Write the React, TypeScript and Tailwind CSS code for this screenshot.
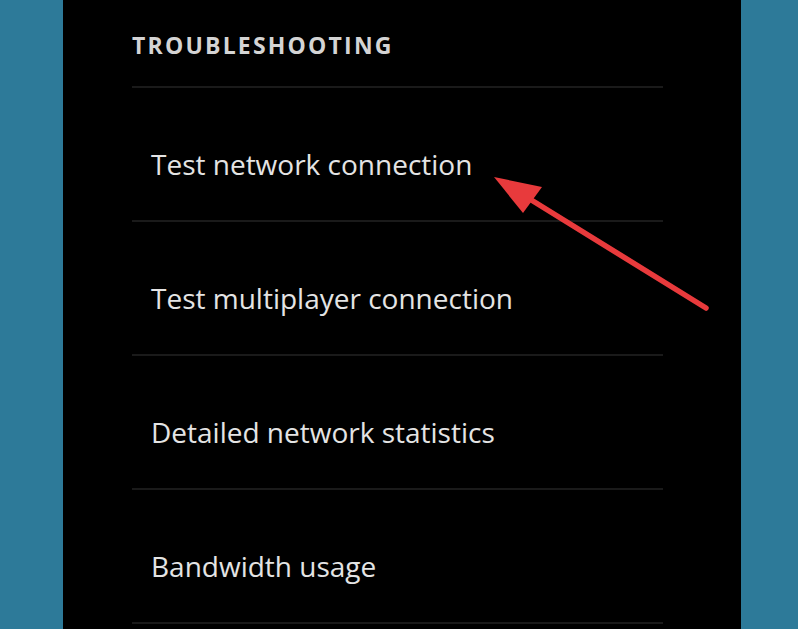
import React from 'react';

const items = [
  'Test network connection',
  'Test multiplayer connection',
  'Detailed network statistics',
  'Bandwidth usage',
];

// red annotation arrow drawn over the first row
const Arrow = () => (
  <svg className="absolute left-0 top-0 pointer-events-none" width="798" height="629" viewBox="0 0 798 629">
    <line x1="706" y1="308" x2="520" y2="193" stroke="#e83a3c" strokeWidth="5.5" strokeLinecap="round" />
    <polygon points="494,177 542,187 523,213" fill="#e83a3c" />
  </svg>
);

const App: React.FC = () => {
  return (
    <div className="relative w-[798px] h-[629px] bg-[#2d7a99] overflow-hidden" style={{ fontFamily: '"Open Sans", "Noto Sans", sans-serif' }}>
      <div className="ml-[63px] w-[678px] h-full bg-black pl-[69px] pr-[78px]">
        <div className="h-[88px] border-b-2 border-[#1a1a1a] pt-[30px]">
          <h2 className="text-[23px] leading-[30px] font-bold tracking-[2.2px] text-[#d4d4d4]">TROUBLESHOOTING</h2>
        </div>
        {items.map((label) => (
          <div key={label} className="h-[134px] border-b-2 border-[#1a1a1a] pl-[19px] pt-[57px]">
            <span className="text-[28px] leading-[38px] text-[#e4e4e4]">{label}</span>
          </div>
        ))}
      </div>
      <Arrow />
    </div>
  );
};

export default App;
